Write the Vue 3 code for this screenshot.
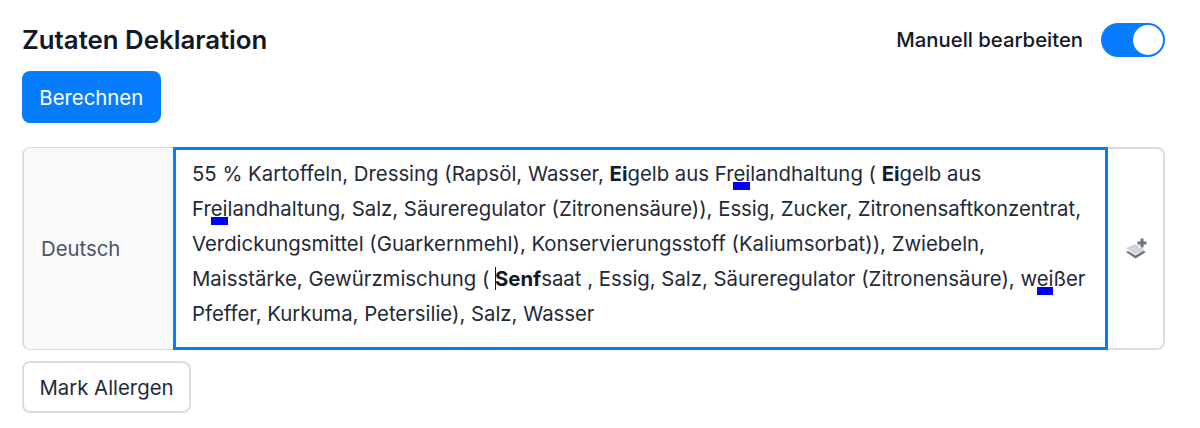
<script setup>
import { ref } from "vue";

const manual = ref(true);
</script>

<template>
  <div class="page">
    <header class="head">
      <h2>Zutaten Deklaration</h2>
      <div class="switch-wrap">
        <span>Manuell bearbeiten</span>
        <button class="switch" :class="{ on: manual }" @click="manual = !manual">
          <span class="knob"></span>
        </button>
      </div>
    </header>

    <button class="btn primary">Berechnen</button>

    <div class="row">
      <div class="lang">Deutsch</div>
      <div class="editor">
        55 % Kartoffeln, Dressing (Rapsöl, Wasser, <b>Ei</b>gelb aus Fr<span class="mark">ei</span>landhaltung ( <b>Ei</b>gelb aus<br />
        Fr<span class="mark">ei</span>landhaltung, Salz, Säureregulator (Zitronensäure)), Essig, Zucker, Zitronensaftkonzentrat,<br />
        Verdickungsmittel (Guarkernmehl), Konservierungsstoff (Kaliumsorbat)), Zwiebeln,<br />
        Maisstärke, Gewürzmischung ( <span class="caret"></span><b>Senf</b>saat , Essig, Salz, Säureregulator (Zitronensäure), w<span class="mark">ei</span>ßer<br />
        Pfeffer, Kurkuma, Petersilie), Salz, Wasser
      </div>
      <div class="side">
        <svg width="24" height="24" viewBox="0 0 24 24">
          <path d="M2 11 11 7l4 2v2h3l3 2-10 4.500z" fill="#d1d5db" />
          <path d="M2 15l2-1 7.500 4.500L19 14l3 1-10.500 6.500z" fill="#6b7280" />
          <path d="M13.500 4.500h3v-3h3v3h3v3h-3v3h-3v-3h-3z" fill="#6b7280" />
        </svg>
      </div>
    </div>

    <button class="btn outline">Mark Allergen</button>
  </div>
</template>

<style>
body {
  background: #fff;
}
</style>

<style scoped>
.page {
  width: 1200px;
  height: 428px;
  box-sizing: border-box;
  padding: 20px 35px 0 22px;
  display: flex;
  flex-direction: column;
  align-items: flex-start;
  font-family: Inter, "Liberation Sans", sans-serif;
  color: #1f2937;
  overflow: hidden;
}

.head {
  width: 100%;
  height: 39px;
  display: flex;
  justify-content: space-between;
  align-items: center;
  margin-bottom: 12px;
}

h2 {
  margin: 0;
  font-size: 25.8px;
  font-weight: 600;
  color: #111827;
}

.switch-wrap {
  display: flex;
  align-items: center;
  gap: 18px;
  font-size: 20.3px;
  font-weight: 450;
  color: #111827;
}

.switch {
  width: 64px;
  height: 34px;
  padding: 2px;
  border: none;
  border-radius: 17px;
  background: #087cff;
  display: flex;
  justify-content: flex-end;
}

.knob {
  width: 30px;
  height: 30px;
  border-radius: 50%;
  background: #fff;
}

.btn {
  height: 52px;
  box-sizing: border-box;
  padding: 0;
  border-radius: 8px;
  font-family: inherit;
  font-size: 20.33px;
  white-space: nowrap;
}

.primary {
  width: 138.5px;
  border: none;
  background: #087cff;
  color: #fff;
}

.row {
  width: 100%;
  height: 203px;
  box-sizing: border-box;
  margin: 24px 0 11px;
  border: 2px solid #d9dce3;
  border-radius: 8px;
  display: flex;
}

.lang {
  width: 149px;
  padding-left: 17px;
  box-sizing: border-box;
  margin: -1px 0;
  display: flex;
  align-items: center;
  background: #f8f9fb;
  border-radius: 6px 0 0 6px;
  font-size: 20.33px;
  color: #4b5563;
}

.editor {
  width: 935px;
  box-sizing: border-box;
  margin: -2px 0;
  padding: 7px 16px;
  border: 3px solid #087cff;
  background: #fff;
  font-size: 20.33px;
  line-height: 34.9px;
  color: #1f2937;
  white-space: nowrap;
}

.editor b {
  font-weight: 700;
  color: #111827;
}

.mark {
  position: relative;
}

.mark::after {
  content: "";
  position: absolute;
  left: 0;
  right: 0;
  bottom: -4px;
  height: 8px;
  background: #0000f5;
}

.caret {
  display: inline-block;
  width: 1px;
  height: 23px;
  margin-right: -1px;
  background: #111827;
  vertical-align: -4px;
}

.side {
  flex: 1;
  display: flex;
  align-items: center;
  justify-content: center;
}

.outline {
  width: 169px;
  border: 2px solid #d9dce3;
  background: #fff;
  color: #1f2937;
}
</style>
